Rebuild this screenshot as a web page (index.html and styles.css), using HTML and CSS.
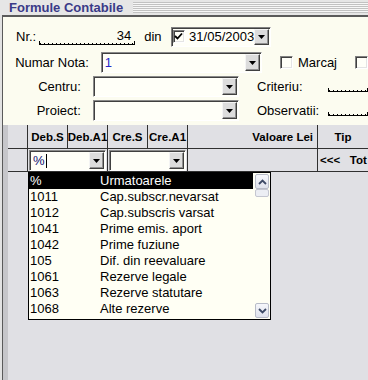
FILE: index.html
```html
<!DOCTYPE html>
<html lang="ro">
<head>
    <meta charset="UTF-8">
    <title>Formule Contabile</title>
    <link rel="stylesheet" href="styles.css">
</head>
<body>
    <div class="titlebar">
        <span class="title">Formule Contabile</span>
        <span class="grip"></span>
    </div>

    <div class="window">
        <div class="form">
            <div class="row-nr">
                <span>Nr.:</span>
                <span class="dotfield nr-field">34</span>
                <span class="din">din</span>
                <span class="datebox">
                    <span class="check">
                        <svg width="9" height="9" viewBox="0 0 9 9"><path d="M1 4 L3.5 6.5 L8 1.5" fill="none" stroke="#000" stroke-width="1.8"/></svg>
                    </span>
                    <span class="date">31/05/2003</span>
                    <span class="dd-btn"><svg width="7" height="4" viewBox="0 0 7 4"><polygon points="0,0 7,0 3.5,4" fill="#000"/></svg></span>
                </span>
            </div>

            <div class="row">
                <span class="lbl">Numar Nota:</span>
                <span class="combo"><span class="combo-text blue">1</span><span class="dd-btn"><svg width="7" height="4" viewBox="0 0 7 4"><polygon points="0,0 7,0 3.5,4" fill="#000"/></svg></span></span>
                <span class="side">
                    <span class="check"></span>
                    <span class="marcaj">Marcaj</span>
                    <span class="check"></span>
                </span>
            </div>

            <div class="row">
                <span class="lbl">Centru:</span>
                <span class="combo"><span class="combo-text"></span><span class="dd-btn"><svg width="7" height="4" viewBox="0 0 7 4"><polygon points="0,0 7,0 3.5,4" fill="#000"/></svg></span></span>
                <span class="side">
                    <span class="side-lbl">Criteriu:</span>
                    <span class="dotfield side-field"></span>
                </span>
            </div>

            <div class="row">
                <span class="lbl">Proiect:</span>
                <span class="combo"><span class="combo-text"></span><span class="dd-btn"><svg width="7" height="4" viewBox="0 0 7 4"><polygon points="0,0 7,0 3.5,4" fill="#000"/></svg></span></span>
                <span class="side">
                    <span class="side-lbl">Observatii:</span>
                    <span class="dotfield side-field"></span>
                </span>
            </div>
        </div>

        <div class="grid">
            <div class="grid-head">
                <div class="cell"></div>
                <div class="cell">Deb.S</div>
                <div class="cell">Deb.A1</div>
                <div class="cell">Cre.S</div>
                <div class="cell">Cre.A1</div>
                <div class="cell right">Valoare Lei</div>
                <div class="cell last">Tip</div>
            </div>
            <div class="grid-row">
                <div class="cell"></div>
                <div class="cell span2">
                    <span class="combo small"><span class="combo-text navy">%<i class="caret"></i></span><span class="dd-btn"><svg width="7" height="4" viewBox="0 0 7 4"><polygon points="0,0 7,0 3.5,4" fill="#000"/></svg></span></span>
                </div>
                <div class="cell span2">
                    <span class="combo small"><span class="combo-text"></span><span class="dd-btn"><svg width="7" height="4" viewBox="0 0 7 4"><polygon points="0,0 7,0 3.5,4" fill="#000"/></svg></span></span>
                </div>
                <div class="cell"></div>
                <div class="cell last tot">&lt;&lt;&lt;   Tot</div>
            </div>

            <div class="droplist">
                <div class="items">
                    <div class="item selected"><span class="code">%</span><span>Urmatoarele</span></div>
                    <div class="item"><span class="code">1011</span><span>Cap.subscr.nevarsat</span></div>
                    <div class="item"><span class="code">1012</span><span>Cap.subscris varsat</span></div>
                    <div class="item"><span class="code">1041</span><span>Prime emis. aport</span></div>
                    <div class="item"><span class="code">1042</span><span>Prime fuziune</span></div>
                    <div class="item"><span class="code">105</span><span>Dif. din reevaluare</span></div>
                    <div class="item"><span class="code">1061</span><span>Rezerve legale</span></div>
                    <div class="item"><span class="code">1063</span><span>Rezerve statutare</span></div>
                    <div class="item"><span class="code">1068</span><span>Alte rezerve</span></div>
                </div>
                <div class="scroll">
                    <span class="sbtn"><svg width="9" height="6" viewBox="0 0 9 6"><path d="M1 5 L4.5 1.5 L8 5" fill="none" stroke="#3d4a66" stroke-width="1.8"/></svg></span>
                    <span class="thumb"></span>
                    <span class="track"></span>
                    <span class="sbtn"><svg width="9" height="6" viewBox="0 0 9 6"><path d="M1 1 L4.5 4.5 L8 1" fill="none" stroke="#3d4a66" stroke-width="1.8"/></svg></span>
                </div>
            </div>
        </div>
    </div>
</body>
</html>
```

FILE: styles.css
```css
* {
    margin: 0;
    padding: 0;
    box-sizing: border-box;
}

body {
    width: 368px;
    height: 380px;
    overflow: hidden;
    background: #e2e2e2;
    font-family: 'Liberation Sans', Arial, sans-serif;
    font-size: 13px;
    color: #000;
}

/* title bar */
.titlebar {
    height: 15px;
    display: flex;
    align-items: center;
    background: #e6e6e6;
}

.title {
    padding-left: 9px;
    font-weight: bold;
    font-size: 13px;
    line-height: 15px;
    color: #3a3a88;
}

.grip {
    flex: 1;
    height: 11px;
    margin-left: 10px;
    background: repeating-linear-gradient(#c2c2c2 0 1px, #f7f7f7 1px 2px);
}

.window {
    width: 366px;
    margin-left: 2px;
    border-left: 1px solid #5a5a5a;
    border-top: 2px solid #5a5a5a;
    height: 365px;
}

/* header form */
.form {
    height: 108px;
    padding-top: 10px;
    background: #fcfcf0;
    display: flex;
    flex-direction: column;
}

.row-nr {
    height: 19px;
    padding-left: 13px;
    display: flex;
    align-items: center;
    white-space: nowrap;
}

.dotfield {
    position: relative;
    display: inline-block;
}

.dotfield::after {
    content: "";
    position: absolute;
    left: 0;
    right: 0;
    bottom: 0;
    height: 4px;
    border-left: 1px solid #000;
    border-right: 1px solid #000;
    background:
        repeating-linear-gradient(to right, #000 0 1px, transparent 1px 4px) bottom / 100% 2px no-repeat,
        linear-gradient(#000, #000) bottom / 100% 1px no-repeat;
}

.nr-field {
    width: 96px;
    height: 16px;
    margin-left: 3px;
    padding-right: 4px;
    text-align: right;
    line-height: 14px;
}

.din {
    margin-left: 9px;
}

.datebox {
    width: 100px;
    height: 20px;
    margin-left: 9px;
    display: flex;
    align-items: center;
    border: 1px solid;
    border-color: #808080 #fff #fff #808080;
    box-shadow: inset 1px 1px #404040;
    background: #fffff8;
}

.datebox .check {
    margin-left: 1px;
}

.date {
    margin-left: 4px;
}

.datebox .dd-btn {
    margin-left: auto;
    margin-right: 1px;
    height: 16px;
}

.check {
    width: 13px;
    height: 13px;
    display: inline-flex;
    align-items: center;
    justify-content: center;
    border: 1px solid;
    border-color: #808080 #fff #fff #808080;
    box-shadow: inset 1px 1px #404040, inset -1px -1px #e4e4e4;
    background: #fffff8;
}

.row {
    height: 21px;
    margin-top: 3px;
    display: flex;
    align-items: center;
    white-space: nowrap;
}

.row-nr + .row {
    margin-top: 6px;
}

.lbl {
    width: 89px;
    text-align: right;
}

.combo {
    width: 167px;
    height: 21px;
    margin-left: 12px;
    display: flex;
    align-items: center;
    border: 1px solid;
    border-color: #8a8a8a #fff #fff #8a8a8a;
    box-shadow: inset 1px 1px #404040;
    background: #fffff8;
}

.combo-text {
    flex: 1;
    padding-left: 3px;
    display: flex;
    align-items: center;
}

.blue {
    color: #2828c8;
}

.navy {
    color: #101070;
}

.caret {
    width: 1px;
    height: 14px;
    margin-left: 1px;
    background: #000;
}

.dd-btn {
    width: 15px;
    height: 17px;
    margin-right: 1px;
    display: inline-flex;
    align-items: center;
    justify-content: center;
    background: #dcdcdc;
    border: 1px solid;
    border-color: #f4f4f4 #404040 #404040 #f4f4f4;
    box-shadow: inset -1px -1px #909090;
}

.side {
    margin-left: 18px;
    display: flex;
    align-items: center;
}

.marcaj {
    margin-left: 5px;
    width: 57px;
}

.side-lbl {
    width: 71px;
}

.side-field {
    width: 40px;
    height: 5px;
    margin-top: 6px;
}

/* grid */
.grid {
    position: relative;
    height: 255px;
    border-left: 5px solid #c6c6ca;
    background: #e0e0e4;
}

.grid-head,
.grid-row {
    display: grid;
    grid-template-columns: 20px 40px 40px 40px 40px 130px 50px;
}

.grid-head {
    height: 24px;
}

.grid-row {
    height: 23px;
}

.cell {
    border-right: 1px solid #303030;
    border-bottom: 1px solid #303030;
    display: flex;
    align-items: center;
    justify-content: center;
    font-weight: bold;
    font-size: 11.5px;
    white-space: nowrap;
    overflow: hidden;
}

.cell.right {
    justify-content: flex-end;
    padding-right: 4px;
}

.cell.last {
    border-right: none;
}

.cell.span2 {
    grid-column: span 2;
    padding: 1px 1px 0 1px;
    align-items: flex-start;
}

.combo.small {
    width: 100%;
    margin-left: 0;
    font-weight: normal;
    font-size: 13px;
}

.tot {
    justify-content: flex-start;
    padding-left: 2px;
    white-space: pre;
}

/* dropdown list over the grid */
.droplist {
    position: absolute;
    left: 20px;
    top: 47px;
    width: 243px;
    height: 148px;
    border: 1px solid #000;
    background: #fffff4;
    display: flex;
}

.items {
    width: 224px;
}

.item {
    height: 16px;
    line-height: 16px;
    display: flex;
    white-space: nowrap;
}

.item.selected {
    background: #000;
    color: #fff;
}

.code {
    width: 71px;
    padding-left: 1px;
}

.scroll {
    flex: 1;
    padding: 1px 1px 1px 2px;
    display: flex;
    flex-direction: column;
}

.sbtn {
    height: 15px;
    display: flex;
    align-items: center;
    justify-content: center;
    border: 1px solid #b8bcc8;
    border-radius: 2px;
    background: linear-gradient(#f6f7fb, #dfe2ec);
}

.thumb {
    height: 8px;
    border: 1px solid #c4c6d0;
    border-radius: 2px;
    background: #eceef4;
}

.track {
    flex: 1;
}
```
